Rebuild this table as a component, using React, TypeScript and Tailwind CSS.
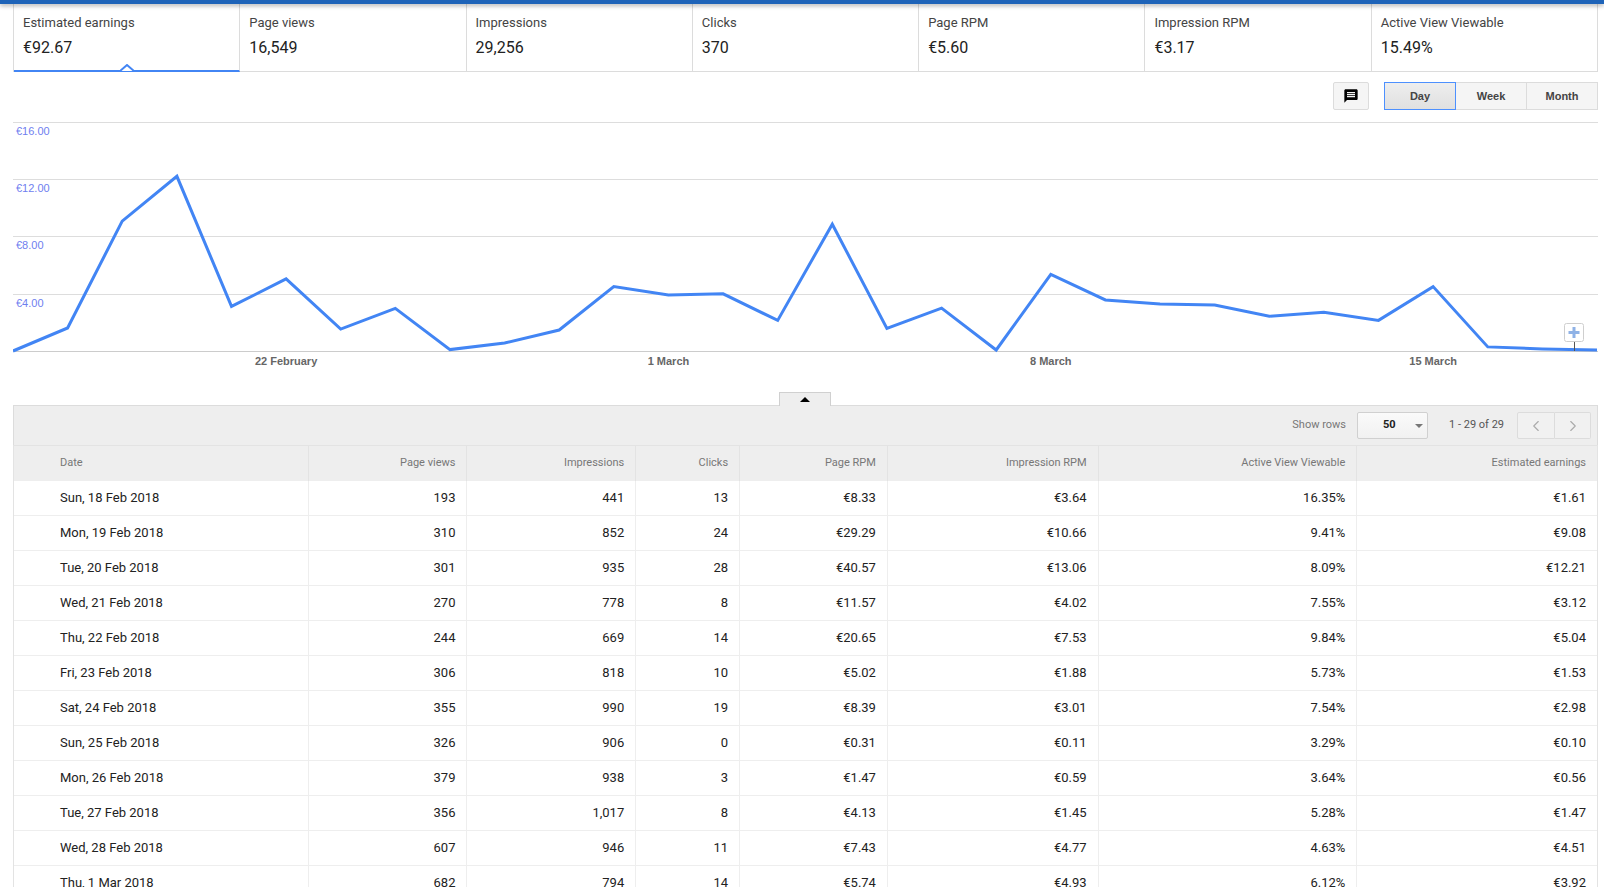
import { ChevronLeft, ChevronRight } from 'lucide-react'

const METRICS = [
  { label: 'Estimated earnings', value: '€92.67' },
  { label: 'Page views', value: '16,549' },
  { label: 'Impressions', value: '29,256' },
  { label: 'Clicks', value: '370' },
  { label: 'Page RPM', value: '€5.60' },
  { label: 'Impression RPM', value: '€3.17' },
  { label: 'Active View Viewable', value: '15.49%' },
]

// daily earnings, 17 Feb .. 18 Mar
const EARNINGS = [
  0, 1.61, 9.08, 12.21, 3.12, 5.04, 1.53, 2.98, 0.1, 0.56, 1.47, 4.51, 3.92, 4.0, 2.14, 8.86, 1.57,
  3.0, 0.07, 5.36, 3.57, 3.29, 3.21, 2.43, 2.71, 2.14, 4.5, 0.29, 0.14, 0.07,
]

const COLUMNS = [
  { label: 'Date', w: 'w-[294px]', align: 'left' },
  { label: 'Page views', w: 'w-[159px]', align: 'right' },
  { label: 'Impressions', w: 'w-[169px]', align: 'right' },
  { label: 'Clicks', w: 'w-[104px]', align: 'right' },
  { label: 'Page RPM', w: 'w-[148px]', align: 'right' },
  { label: 'Impression RPM', w: 'w-[211px]', align: 'right' },
  { label: 'Active View Viewable', w: 'w-[259px]', align: 'right' },
  { label: 'Estimated earnings', w: 'w-[241px]', align: 'right' },
]

const ROWS = [
  ['Sun, 18 Feb 2018', '193', '441', '13', '€8.33', '€3.64', '16.35%', '€1.61'],
  ['Mon, 19 Feb 2018', '310', '852', '24', '€29.29', '€10.66', '9.41%', '€9.08'],
  ['Tue, 20 Feb 2018', '301', '935', '28', '€40.57', '€13.06', '8.09%', '€12.21'],
  ['Wed, 21 Feb 2018', '270', '778', '8', '€11.57', '€4.02', '7.55%', '€3.12'],
  ['Thu, 22 Feb 2018', '244', '669', '14', '€20.65', '€7.53', '9.84%', '€5.04'],
  ['Fri, 23 Feb 2018', '306', '818', '10', '€5.02', '€1.88', '5.73%', '€1.53'],
  ['Sat, 24 Feb 2018', '355', '990', '19', '€8.39', '€3.01', '7.54%', '€2.98'],
  ['Sun, 25 Feb 2018', '326', '906', '0', '€0.31', '€0.11', '3.29%', '€0.10'],
  ['Mon, 26 Feb 2018', '379', '938', '3', '€1.47', '€0.59', '3.64%', '€0.56'],
  ['Tue, 27 Feb 2018', '356', '1,017', '8', '€4.13', '€1.45', '5.28%', '€1.47'],
  ['Wed, 28 Feb 2018', '607', '946', '11', '€7.43', '€4.77', '4.63%', '€4.51'],
  ['Thu, 1 Mar 2018', '682', '794', '14', '€5.74', '€4.93', '6.12%', '€3.92'],
]

const CHART_W = 1585
const STEP = 1584 / 29
const BASE = 229
const PX_PER_EURO = 14.31

function MetricTabs() {
  return (
    <div className="flex h-[68px] border-l border-[#dcdcdc]">
      {METRICS.map((m, i) => (
        <div
          key={m.label}
          className={
            i === 0
              ? 'relative flex-1 border-r border-b-2 border-r-[#dcdcdc] border-b-[#4285f4] pl-[9px] pt-[11px]'
              : 'relative flex-1 border-r border-b border-[#dcdcdc] pl-[9px] pt-[11px]'
          }
        >
          <div className="text-[13px] leading-[15px] text-[#444]">{m.label}</div>
          <div className="mt-[8px] text-[16px] leading-[20px] text-[#222]">{m.value}</div>
          {i === 0 && (
            <svg className="absolute bottom-[-2px] left-[106px]" width="14" height="8" viewBox="0 0 14 8">
              <polygon points="0,7 7,1 14,7" fill="white" />
              <polyline points="0,7 7,1 14,7" fill="none" stroke="#4285f4" strokeWidth="2" />
            </svg>
          )}
        </div>
      ))}
    </div>
  )
}

function ChartToolbar() {
  const periods = ['Day', 'Week', 'Month']
  return (
    <div className="mt-[10px] flex h-[28px] justify-end gap-[15px]">
      <button className="flex w-[36px] items-center justify-center rounded-[2px] border border-[#dcdcdc] bg-[#f5f5f5]">
        <svg width="16" height="16" viewBox="0 0 24 24">
          <path
            d="M20 2H4c-1.1 0-2 .9-2 2v18l4-4h14c1.1 0 2-.9 2-2V4c0-1.1-.9-2-2-2zm-2 12H6v-2h12v2zm0-3H6V9h12v2zm0-3H6V6h12v2z"
            fill="#000"
          />
        </svg>
      </button>
      <div className="flex">
        {periods.map((p, i) => (
          <button
            key={p}
            className={
              i === 0
                ? 'w-[72px] border border-[#4d90fe] bg-gradient-to-b from-[#eeeeee] to-[#e0e0e0] font-["Liberation_Sans",Arial,sans-serif] text-[11px] font-bold text-[#444]'
                : 'w-[71px] border border-l-0 border-[#dcdcdc] bg-[#f5f5f5] font-["Liberation_Sans",Arial,sans-serif] text-[11px] font-bold text-[#444]'
            }
          >
            {p}
          </button>
        ))}
      </div>
    </div>
  )
}

function EarningsChart() {
  const pts = EARNINGS.map((v, i) => `${(i * STEP).toFixed(1)},${(BASE - v * PX_PER_EURO).toFixed(1)}`).join(' ')
  const grid = [
    { y: 0.5, label: '€16.00' },
    { y: 57.5, label: '€12.00' },
    { y: 114.5, label: '€8.00' },
    { y: 172.5, label: '€4.00' },
  ]
  const ticks = [
    { i: 5, label: '22 February' },
    { i: 12, label: '1 March' },
    { i: 19, label: '8 March' },
    { i: 26, label: '15 March' },
  ]
  const font = "'Liberation Sans', Arial, sans-serif"
  return (
    <svg className="mt-[12px] block" width={CHART_W} height="270" viewBox={`0 0 ${CHART_W} 270`}>
      {grid.map((g) => (
        <g key={g.label}>
          <line x1="0" x2={CHART_W} y1={g.y} y2={g.y} stroke="#dddddd" />
          <text x="3" y={g.y + 12.5} fontSize="11" fontFamily={font} fill="#6f80ef">
            {g.label}
          </text>
        </g>
      ))}
      <line x1="0" x2={CHART_W} y1={BASE + 0.5} y2={BASE + 0.5} stroke="#cccccc" />
      <polyline points={pts} fill="none" stroke="#4285f4" strokeWidth="3" strokeLinejoin="miter" />
      {ticks.map((t) => (
        <text
          key={t.label}
          x={t.i * STEP}
          y="243"
          textAnchor="middle"
          fontSize="11"
          fontWeight="bold"
          fontFamily={font}
          fill="#666"
        >
          {t.label}
        </text>
      ))}
      <line x1="1561.5" x2="1561.5" y1="219" y2={BASE} stroke="#555" />
      <rect x="1551.5" y="201.5" width="19" height="18" rx="2" fill="#fff" stroke="#cfcfcf" />
      <path d="M1561 205v11M1555.5 210.5h11" stroke="#8fb2e6" strokeWidth="3" />
    </svg>
  )
}

function TableToolbar() {
  return (
    <div className="flex h-[40px] items-center justify-end border-t border-l border-r border-[#dcdcdc] bg-[#eeeeee] pr-[6px]">
      <span className="text-[11px] text-[#777]">Show rows</span>
      <div className="ml-[11px] flex h-[27px] w-[71px] items-center rounded-[2px] border border-[#d0d0d0] bg-gradient-to-b from-[#fafafa] to-[#f1f1f1]">
        <span className="ml-[25px] text-[11px] font-bold text-[#222]">50</span>
        <span className="ml-[19px] h-0 w-0 border-x-[4px] border-t-[4px] border-x-transparent border-t-[#777]" />
      </div>
      <span className="ml-[21px] text-[11px] text-[#555]">1 - 29 of 29</span>
      <div className="ml-[13px] flex h-[27px]">
        <button className="flex w-[38px] items-center justify-center rounded-l-[2px] border border-[#dcdcdc] bg-[#f1f1f1]">
          <ChevronLeft size={18} strokeWidth={1.5} color="#aaa" />
        </button>
        <button className="flex w-[36px] items-center justify-center rounded-r-[2px] border border-l-0 border-[#dcdcdc] bg-[#f1f1f1]">
          <ChevronRight size={18} strokeWidth={1.5} color="#aaa" />
        </button>
      </div>
    </div>
  )
}

function DataGrid() {
  return (
    <div className="border-l border-r border-[#e3e3e3]">
      <div className="flex h-[36px] border-t border-[#e3e3e3] bg-[#eeeeee]">
        {COLUMNS.map((c, i) => (
          <div
            key={c.label}
            className={`${c.w} flex items-center text-[11px] text-[#777] ${
              i === 0 ? 'pl-[46px]' : 'justify-end border-l border-[#e3e3e3] pr-[11px]'
            }`}
          >
            {c.label}
          </div>
        ))}
      </div>
      {ROWS.map((r) => (
        <div key={r[0]} className="flex h-[35px] border-b border-[#eeeeee] bg-white">
          {r.map((cell, i) => (
            <div
              key={i}
              className={`${COLUMNS[i].w} flex items-center text-[13px] text-[#222] ${
                i === 0 ? 'pl-[46px]' : 'justify-end border-l border-[#eeeeee] pr-[11px]'
              }`}
            >
              {cell}
            </div>
          ))}
        </div>
      ))}
    </div>
  )
}

export default function App() {
  return (
    <div className="h-[887px] w-[1604px] overflow-hidden bg-white font-['Roboto',sans-serif]">
      <div className="relative z-10 h-[4px] bg-[#1e63b8] shadow-[0_2px_4px_rgba(0,0,0,0.3)]" />
      <div className="ml-[13px] w-[1585px]">
        <MetricTabs />
        <ChartToolbar />
        <EarningsChart />
        <div className="relative z-10 -mb-px ml-[766px] flex h-[14px] w-[52px] items-center justify-center border border-b-0 border-[#d0d0d0] bg-[#eeeeee]">
          <span className="h-0 w-0 border-x-[5px] border-b-[5px] border-x-transparent border-b-black" />
        </div>
        <TableToolbar />
        <DataGrid />
      </div>
    </div>
  )
}
